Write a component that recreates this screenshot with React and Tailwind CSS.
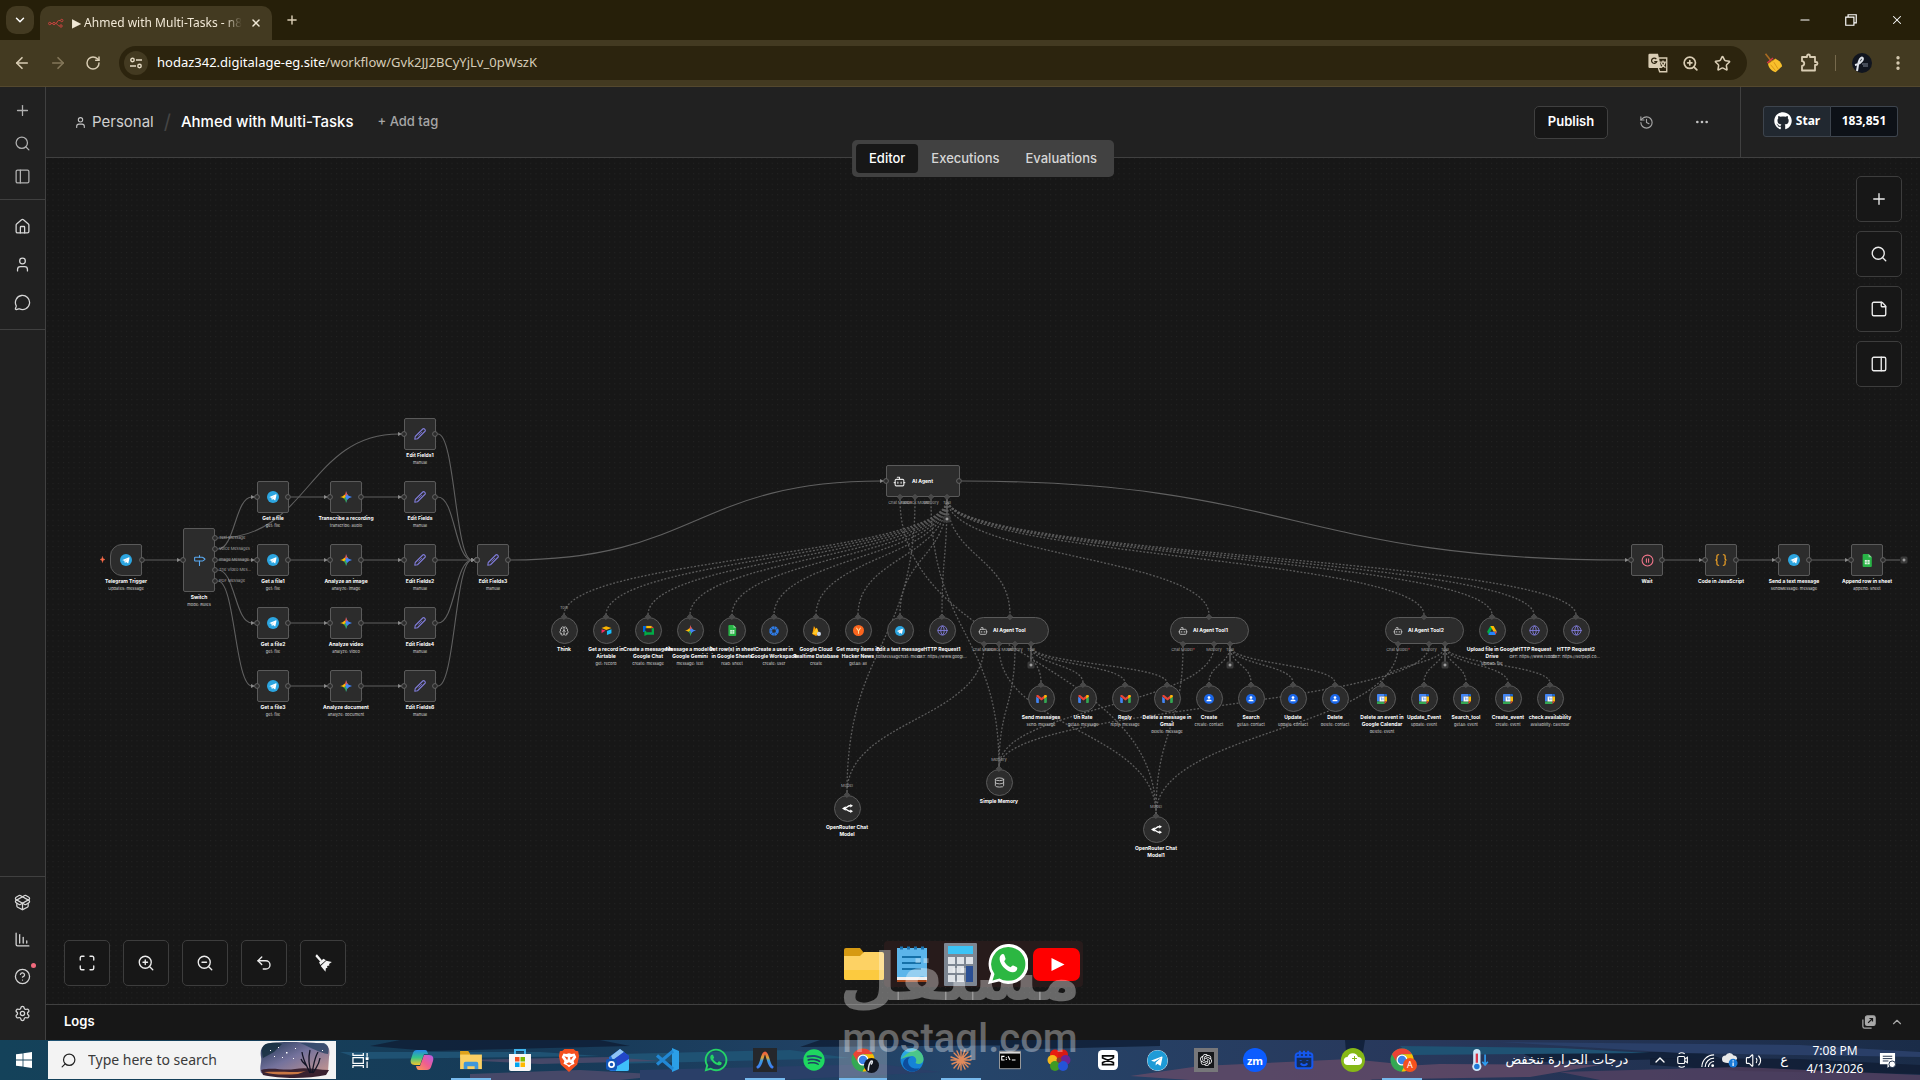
import {
  ArrowLeft,
  ArrowRight,
  Bot,
  Braces,
  Brain,
  ChartColumnDecreasing,
  ChevronDown,
  ChevronUp,
  CircleHelp,
  CirclePause,
  Database,
  Ellipsis,
  EllipsisVertical,
  Globe,
  History,
  House,
  Maximize,
  MessageCircle,
  Milestone,
  Minus,
  PackageOpen,
  PanelLeft,
  PanelRight,
  Plus,
  RotateCw,
  Search,
  Settings,
  Star,
  StickyNote,
  Undo2,
  User,
  Volume2,
  X,
  ZoomIn,
  ZoomOut,
} from "lucide-react";
import { FaGithub, FaSpotify, FaTelegram, FaWhatsapp } from "react-icons/fa";
import { SiOpenai } from "react-icons/si";

/* ---------- small drawings ---------- */

const N8nLogo = () => (
  <svg width="16" height="12" viewBox="0 0 32 20" fill="none" stroke="#c8433f" strokeWidth="2">
    <circle cx="3.500" cy="11" r="2.400" />
    <circle cx="12" cy="11" r="2.400" />
    <path d="M6 11h3.500M14.500 11c5 0 3-6 7-6h3M16 11c3 0 3 5 7 5" />
    <circle cx="27.500" cy="5" r="2.400" />
    <circle cx="26" cy="16" r="2.400" />
  </svg>
);

const Telegram = ({ className = "size-3" }) => (
  <svg viewBox="0 0 24 24" className={className}>
    <circle cx="12" cy="12" r="12" fill="#2ca5e0" />
    <path fill="#fff" d="M5 11.8 18 6.6c.7-.2 1.200.2 1 1.200l-2.200 10.200c-.2.800-.7.900-1.300.600l-3.300-2.500-1.700 1.600c-.4.400-.8.300-.9-.2l-.9-3.800-3.500-1.100c-.8-.2-.8-.6-.2-.8z" />
    <path fill="#b8d9ec" d="m9.700 13.700 6.200-4.500-4.900 5-.4 2.200z" />
  </svg>
);

const Gemini = ({ className = "size-3" }) => (
  <svg viewBox="0 0 24 24" className={className}>
    <path fill="#4285f4" d="M12 0c1 7 5 11 12 12-7 1-11 5-12 12z" />
    <path fill="#f05545" d="M12 0c-1 7-3 9-6 10.500L12 13l4-5C13.500 5.500 12.500 3 12 0z" />
    <path fill="#fbbc04" d="M0 12c4-.6 7-2 9-5l3 5-4 3c-2-1.600-5-2.600-8-3z" />
    <path fill="#34a853" d="M12 24c-.6-4-2-7.500-5-9.500l5-2.500 2 6z" />
    <path fill="#4285f4" d="M13 6.500c2 3 6 5 11 5.500-5 .5-8 2.500-10 5.500L10.500 12z" />
  </svg>
);

const EditPen = () => (
  <svg viewBox="0 0 24 24" className="size-3" fill="none" stroke="#7f7bd8" strokeWidth="2.200" strokeLinejoin="round">
    <path d="m1.500 22.500 1-5.500L17.500 2a2.400 2.400 0 0 1 3.400 0l1.100 1.100a2.400 2.400 0 0 1 0 3.400L7 21.500z" />
    <path d="m9 15 7-7" strokeWidth="1.400" />
  </svg>
);

const Sheets = ({ className = "size-3" }) => (
  <svg viewBox="0 0 24 24" className={className}>
    <path fill="#28b446" d="M5 0h9l6 6v16a2 2 0 0 1-2 2H5a2 2 0 0 1-2-2V2a2 2 0 0 1 2-2z" />
    <path fill="#8ed29b" d="M14 0v6h6z" />
    <path fill="#e4f4e6" d="M7 11h9v8H7z" />
    <path stroke="#28b446" d="M7 15h9M11.500 11v8" />
  </svg>
);

const Gmail = () => (
  <svg viewBox="0 0 24 18" className="h-2 w-[11px]">
    <path fill="#4285f4" d="M0 4v12a2 2 0 0 0 2 2h4V8z" />
    <path fill="#34a853" d="M24 4v12a2 2 0 0 1-2 2h-4V8z" />
    <path fill="#ea4335" d="M0 3c0-3 3-4 5-2.500L12 6l7-5.500C21 -1 24 0 24 3l-6 5-6 4.500L6 8z" />
    <path fill="#fbbc04" d="M18 1.300 19 .5C21-1 24 0 24 3v1l-6 4.500z" />
  </svg>
);

const Contact = () => (
  <svg viewBox="0 0 24 24" className="size-[10px]">
    <circle cx="12" cy="12" r="12" fill="#1a66e8" />
    <circle cx="12" cy="8.500" r="3.200" fill="#fff" />
    <path fill="#fff" d="M5.500 17.500c0-6 13-6 13 0z" />
  </svg>
);

const Calendar = () => (
  <svg viewBox="0 0 24 24" className="size-[10px]">
    <path fill="#4285f4" d="M0 2a2 2 0 0 1 2-2h16v6H6v12H0z" />
    <path fill="#1967d2" d="M18 0h4a2 2 0 0 1 2 2v4h-6z" />
    <path fill="#fbbc04" d="M18 6h6v12h-6z" />
    <path fill="#34a853" d="M0 18h18v6H2a2 2 0 0 1-2-2z" />
    <path fill="#ea4335" d="M18 18h6l-6 6z" />
    <path fill="#fff" d="M6 6h12v12H6z" />
    <path stroke="#4285f4" strokeWidth="1.600" fill="none" d="M9 9h2v6M14.500 9v6" />
  </svg>
);

const Airtable = () => (
  <svg viewBox="0 0 24 20" className="h-[9px] w-[11px]">
    <path fill="#fcb400" d="M11 .5 1 4.500 11.500 9 23 4.500z" />
    <path fill="#18bfff" d="M13 11v9l10-4V7z" />
    <path fill="#f82b60" d="M1 7v9l9-6z" />
  </svg>
);

const GChat = () => (
  <svg viewBox="0 0 24 24" className="size-[11px]">
    <path fill="#0066da" d="M0 2h7v5H5v8H0z" />
    <path fill="#fbbc04" d="M7 2h12v5H7z" />
    <path fill="#ea4335" d="M19 2l5 5h-5z" />
    <path fill="#00ac47" d="M19 7h5v14H9l-6 3V13h4v3h12z" />
  </svg>
);

const Workspace = () => (
  <svg viewBox="0 0 24 24" className="size-[10px]">
    <circle cx="12" cy="12" r="8" fill="none" stroke="#2f7de9" strokeWidth="7" strokeDasharray="5.280 1" />
  </svg>
);

const Firebase = () => (
  <svg viewBox="0 0 24 24" className="size-[10px]">
    <path fill="#ffa000" d="M3 19 7 0l5 8 2-4 6 15-8 5z" />
    <path fill="#ffca28" d="M3 19 14 4l3 10-5 6z" />
    <circle cx="19" cy="19" r="5" fill="#c9d6e8" />
  </svg>
);

const HackerNews = () => (
  <svg viewBox="0 0 24 24" className="size-[11px]">
    <circle cx="12" cy="12" r="12" fill="#fb651e" />
    <path d="m7.500 6 4.500 7 4.500-7M12 13v6" stroke="#ffe0a0" strokeWidth="2.200" fill="none" />
  </svg>
);

const Drive = () => (
  <svg viewBox="0 0 24 22" className="h-[9px] w-[10px]">
    <path fill="#00ac47" d="M8 0h8L4 21 0 14z" />
    <path fill="#ffba00" d="M8 0h8l8 14h-8z" />
    <path fill="#2684fc" d="M7 14h17l-4 8H3z" />
    <path fill="#ea4335" d="M18 14h6l-3.500 7z" />
  </svg>
);

const OpenRouter = () => (
  <svg viewBox="0 0 24 24" className="size-[11px]" fill="none" stroke="#fff" strokeWidth="3">
    <path d="M4 12c6 0 8-6 13-6h2M4 12c6 0 8 6 13 6h2" />
    <path fill="#fff" stroke="none" d="m0 12 8-5v10zM18 2l6 4-6 4zM18 14l6 4-6 4z" />
  </svg>
);

const Broom = ({ className = "size-5" }) => (
  <svg viewBox="0 0 24 24" className={className} fill="#f3f3f3">
    <path d="M2.500 1 4 .5l6 7.500-2 1.700L2 3z" />
    <path d="m6.500 10.500 5.500-4.500 3 2-7 6z" />
    <path d="m8.500 15 7-6.500 7 1.500-3.500 2.500.5 2-3 .5.500 2.500-2 .5-.5 4.500z" />
  </svg>
);

const EmojiBroom = () => (
  <svg viewBox="0 0 24 24" className="size-5">
    <path stroke="#a86a22" strokeWidth="2" d="m3 1 8 10" />
    <path fill="#f9c02b" d="m6 13 9-6c4 2 7 4 8 9l-8 7c-6-2-8-5-9-10z" />
    <path stroke="#d58e16" fill="none" d="m9 14 6 7M13 11l5 8M6 13l9-6" />
    <path stroke="#e0364a" strokeWidth="1.500" d="m5 12 7-6" />
  </svg>
);

const Extension = () => (
  <svg viewBox="0 0 20 20" className="size-5" fill="none" stroke="#d9cdb4" strokeWidth="1.800" strokeLinejoin="round">
    <path d="M3 4h5V3a1.500 1.500 0 0 1 3 0v1h5v5h1a1.500 1.500 0 0 1 0 3h-1v5.500H3V13c3-.3 3-4.500 0-4.800z" />
  </svg>
);

const Translate = () => (
  <svg viewBox="0 0 24 24" className="size-5">
    <path fill="#d9cdb4" d="M2 1h10l4 17H2a1.500 1.500 0 0 1-1.500-1.500v-14A1.500 1.500 0 0 1 2 1z" />
    <path fill="none" stroke="#d9cdb4" strokeWidth="1.600" d="M13 6h9.500v16.500H14L12.500 18M14.500 11h7M18 9v2M20.500 11c-.5 3-2 5-5 6.500M16 12c1 3 2.500 4.500 5 5.500" />
    <path fill="none" stroke="#2d240f" strokeWidth="1.500" d="M10 7.300a3.200 3.200 0 1 0 .5 3H7.500" />
  </svg>
);

const FolderIcon = ({ className }) => (
  <svg viewBox="0 0 40 32" className={className}>
    <path fill="#d69a12" d="M0 2a2 2 0 0 1 2-2h14l4 5v6H0z" />
    <path fill="#fdd264" d="M0 8h16l4-4h18a2 2 0 0 1 2 2v24a2 2 0 0 1-2 2H2a2 2 0 0 1-2-2z" />
    <path fill="#fbc62f" d="M0 22h40v8a2 2 0 0 1-2 2H2a2 2 0 0 1-2-2z" opacity=".7" />
  </svg>
);

const ExplorerIcon = () => (
  <svg viewBox="0 0 24 22" className="h-5 w-[22px]">
    <path fill="#dfa21c" d="M0 1h9l2 3v4H0z" />
    <path fill="#fbd063" d="M0 5h24v16H0z" />
    <path fill="#3f97da" d="M4 21v-6a2 2 0 0 1 2-2h12a2 2 0 0 1 2 2v6h-4v-3H8v3z" />
  </svg>
);

const Chrome = () => (
  <svg viewBox="0 0 48 48" className="size-6">
    <circle cx="24" cy="24" r="23" fill="#34a853" />
    <path fill="#ea4335" d="M4 12.500a23 23 0 0 1 40 0H24a11.500 11.500 0 0 0-10.500 16z" />
    <path fill="#fbbc04" d="M44 12.500A23 23 0 0 1 23 47l10.500-18A11.500 11.500 0 0 0 24 12.500z" />
    <circle cx="24" cy="24" r="11" fill="#fff" />
    <circle cx="24" cy="24" r="8.500" fill="#3b82e8" />
  </svg>
);

const Copilot = () => (
  <svg viewBox="0 0 24 24" className="size-6">
    <defs>
      <linearGradient id="cpA" x1="0" y1="0" x2="0" y2="1">
        <stop offset="0" stopColor="#2385e8" />
        <stop offset=".5" stopColor="#35c48a" />
        <stop offset="1" stopColor="#f3c52c" />
      </linearGradient>
      <linearGradient id="cpB" x1="1" y1="0" x2="0" y2="1">
        <stop offset="0" stopColor="#b45ce8" />
        <stop offset=".5" stopColor="#ef5d90" />
        <stop offset="1" stopColor="#fb9d4c" />
      </linearGradient>
    </defs>
    <path fill="url(#cpA)" d="M7 2h8c2 0 2.500 2 3 4h-4l-4 11H5c-4 0-5-3-4-6l2-6c.6-2 2-3 4-3z" />
    <path fill="url(#cpB)" d="M17 22H9c-2 0-2.500-2-3-4h4l4-11h5c4 0 5 3 4 6l-2 6c-.6 2-2 3-4 3z" />
  </svg>
);

const Store = () => (
  <svg viewBox="0 0 24 24" className="size-6">
    <path fill="none" stroke="#3fb4ee" strokeWidth="2" d="M7 7V2h10v5" />
    <path fill="#f6f6f6" d="M1 6h22v15a2 2 0 0 1-2 2H3a2 2 0 0 1-2-2z" />
    <path fill="#f25022" d="M7 9h4.500v4.500H7z" />
    <path fill="#7fba00" d="M12.500 9H17v4.500h-4.500z" />
    <path fill="#00a4ef" d="M7 14.500h4.500V19H7z" />
    <path fill="#ffb900" d="M12.500 14.500H17V19h-4.500z" />
  </svg>
);

const Brave = () => (
  <svg viewBox="0 0 24 26" className="h-6 w-[22px]">
    <path fill="#f4501e" d="M7 1h10l2 2 3 .5L23 9l-2 9-9 8-9-8L1 9l1-5.500L5 3z" />
    <path fill="#fff" d="m6 6 3 .5 3-.8 3 .8 3-.5 2 4-3 4 1 3-4 2-2 2-2-2-4-2 1-3-3-4z" />
    <path fill="#f4501e" d="m7 9 4 1.200-1 3zM17 9l-4 1.200 1 3zM9 17l3-1.500 3 1.500-3 1.500z" />
  </svg>
);

const Outlook = () => (
  <svg viewBox="0 0 24 24" className="size-6">
    <path fill="#1f6fd8" d="M3 9 14 1l9 7v13a2 2 0 0 1-2 2H5a2 2 0 0 1-2-2z" />
    <path fill="#8fc4f4" d="m5 8 9-7 4 3-11 8z" />
    <path fill="#2247c8" d="m7 12 11-8 5 4v3l-11 7z" />
    <path fill="#3fc0fa" d="m23 11-13 8v4h11a2 2 0 0 0 2-2z" />
    <rect x="0" y="11" width="11" height="11" rx="2" fill="#1256b8" />
    <circle cx="5.500" cy="16.500" r="2.600" fill="none" stroke="#fff" strokeWidth="1.700" />
  </svg>
);

const VsCode = () => (
  <svg viewBox="0 0 24 24" className="size-6">
    <path fill="#2b9fe8" d="m17 0 7 3v18l-7 3z" />
    <path fill="none" stroke="#2288d4" strokeWidth="3.200" d="M18 3 2 16.500M18 21 2 7.500" />
  </svg>
);

const Antigravity = () => (
  <svg viewBox="0 0 24 24" className="size-6">
    <defs>
      <linearGradient id="ag" x1="0" y1="0" x2="0" y2="1">
        <stop offset="0" stopColor="#f0623c" />
        <stop offset=".35" stopColor="#d9a53a" />
        <stop offset=".55" stopColor="#3c9de0" />
        <stop offset="1" stopColor="#3f7df0" />
      </linearGradient>
    </defs>
    <path fill="#25272b" d="M0 0h24v24H0z" />
    <path fill="none" stroke="url(#ag)" strokeWidth="3" strokeLinecap="round" d="M5 19c4-2 4-14 7-14s3 12 7 14" />
  </svg>
);

const Edge = () => (
  <svg viewBox="0 0 24 24" className="size-6">
    <circle cx="12" cy="12" r="11.500" fill="#1583d6" />
    <path fill="#55d27c" d="M10 .7C18-.5 24 6 23.500 12c-.5 4-5 5-8 3 2-3 0-7-4-7-4 .3-8 2-10.500 3C1.500 6 5 1.500 10 .7z" opacity=".85" />
    <path fill="#2ba6e4" d="M1 11C1.500 5 6 .7 11 .6c4 0 6 1.400 6 1.400-6 0-11 4-16 9z" />
    <path fill="#0d4d9c" d="M8 13c0 6 6 9 12 7-5 6-14 4-17-3 0-5 3-8 8-8-2 .6-3 2-3 4z" />
  </svg>
);

const Claude = () => (
  <svg viewBox="0 0 24 24" className="size-6" stroke="#e08a5b" strokeWidth="1.400" strokeLinecap="round">
    <path d="M12 2v20M2 12h20M5 5l14 14M19 4 5 20M8 3l8 18M16 2 9 21M2 9l19 7M22 8 3 16" />
  </svg>
);

const Terminal = () => (
  <svg viewBox="0 0 24 20" className="h-5 w-[22px]">
    <path fill="#050505" stroke="#a8a8a8" d="M.5.500h23v19H.500z" />
    <path fill="#d8d8d8" d="M1 1h22v2H1z" />
    <path stroke="#fff" strokeWidth="1.200" fill="none" d="M6 6H3v4h3M8 7v1M8 9v1M10 6l2 4M14 10h4" />
  </svg>
);

const Photos = () => (
  <svg viewBox="0 0 24 24" className="size-6">
    <circle cx="8" cy="6.500" r="5" fill="#e81c10" />
    <circle cx="16" cy="6.500" r="5" fill="#d81a14" />
    <circle cx="5.500" cy="12" r="5" fill="#f5b81c" />
    <circle cx="18.500" cy="12" r="5" fill="#6a2496" />
    <circle cx="8" cy="18" r="5" fill="#3f9a24" />
    <circle cx="16" cy="18" r="5" fill="#2454d8" />
    <circle cx="12" cy="12" r="2.500" fill="#8b3f2a" />
  </svg>
);

const CapCut = () => (
  <svg viewBox="0 0 24 24" className="size-5">
    <rect width="24" height="24" rx="5" fill="#fff" />
    <path fill="none" stroke="#0b0b0b" strokeWidth="2" d="M18.500 9.500V7H5.500v2.500l13 5.500v2.500h-13V15l13-5.500" />
  </svg>
);

const Zoom = () => (
  <span className="flex size-6 items-center justify-center rounded-full bg-[#0b5cff] text-[11px] leading-none font-bold text-white">zm</span>
);

const CalendarSmile = () => (
  <svg viewBox="0 0 24 24" className="size-5" fill="none" stroke="#1558f0" strokeWidth="2.400">
    <rect x="2" y="4" width="20" height="18" rx="3" fill="#132c5a" />
    <path d="M2 8h20M7 1v6M12 1v6M17 1v6M8 12v1M16 12v1M8 16c2 3 6 3 8 0" />
  </svg>
);

const CloudApp = () => (
  <svg viewBox="0 0 24 24" className="size-6">
    <circle cx="12" cy="12" r="12" fill="#86b817" />
    <path fill="#fff" d="M7 17a4 4 0 0 1-.5-8 5.500 5.500 0 0 1 10.500 0 4 4 0 0 1 0 8z" />
    <path stroke="#86b817" d="M13.500 8v5M11 10.500h5" />
  </svg>
);

const Windows = () => (
  <svg viewBox="0 0 16 16" className="size-4" fill="#fff">
    <path d="M0 2.300 6.600 1.400v6.200H0zM7.400 1.300 16 0v7.600H7.400zM0 8.400h6.600v6.200L0 13.700zM7.400 8.400H16V16l-8.600-1.300z" />
  </svg>
);

const TaskView = () => (
  <svg viewBox="0 0 18 18" className="size-[17px]" fill="none" stroke="#fff" strokeWidth="1.300">
    <path d="M1 1v2.500h11V1M1 17v-2.500h11V17M1 6h11v6H1zM16 1v4M16 10v7" />
    <path fill="#fff" stroke="none" d="M14.500 5.500h3v3h-3z" />
  </svg>
);

const SearchScene = () => (
  <svg viewBox="0 0 70 36" className="h-9 w-[70px]">
    <defs>
      <linearGradient id="sky" x1="0" y1="0" x2="1" y2="1">
        <stop offset="0" stopColor="#1c3350" />
        <stop offset=".45" stopColor="#74729c" />
        <stop offset="1" stopColor="#d09a8e" />
      </linearGradient>
    </defs>
    <path fill="url(#sky)" d="M6 2c12-3 46-2 58 0 6 2 6 8 5 13l-1 15c-14 6-54 6-67 1-2-6 1-10 0-16S1 5 6 2z" />
    <path fill="#3a2230" d="M1 28c12-3 22 1 34-1s22 1 34 1l-3 5c-18 4-46 4-63 0z" />
    <path fill="#c87744" d="M4 30c16-1 34 1 42-1l-8 3c-12 1-26 1-34-2z" />
    <path fill="#15303e" d="M6 2c8-2 12-1 16 0l-8 8-11 6C1 8 2 4 6 2z" opacity=".8" />
    <path fill="#2a4464" d="M40 1h24c5 2 5 7 4 11-8-1-16-6-28-11z" opacity=".8" />
    <path stroke="#121425" fill="none" strokeWidth="1.300" d="M50 31C46 22 43 18 42 10M51 31c-2-9-3-14-1-23M52 31c2-9 2-14 6-21M53 31c4-7 6-8 7-15M47 24c-3-3-5-4-6-7" />
    <path fill="#fff" d="M10 8h1v1h-1zM18 5h1v1h-1zM26 10h1.500v1.500H26zM35 6h1v1h-1zM22 15h1v1h-1zM33 16h1v1h-1zM62 8h1v1h-1zM14 14h1v1h-1z" />
  </svg>
);

/* ---------- workflow data ---------- */

const squares = [
  { x: 126, y: 560, icon: <Telegram />, lines: ["Telegram Trigger"], sub: "Updates: message", trigger: true },
  { x: 273, y: 497, icon: <Telegram />, lines: ["Get a file"], sub: "get: file" },
  { x: 273, y: 560, icon: <Telegram />, lines: ["Get a file1"], sub: "get: file" },
  { x: 273, y: 623, icon: <Telegram />, lines: ["Get a file2"], sub: "get: file" },
  { x: 273, y: 686, icon: <Telegram />, lines: ["Get a file3"], sub: "get: file" },
  { x: 346, y: 497, icon: <Gemini />, lines: ["Transcribe a recording"], sub: "transcribe: audio" },
  { x: 346, y: 560, icon: <Gemini />, lines: ["Analyze an image"], sub: "analyze: image" },
  { x: 346, y: 623, icon: <Gemini />, lines: ["Analyze video"], sub: "analyze: video" },
  { x: 346, y: 686, icon: <Gemini />, lines: ["Analyze document"], sub: "analyze: document" },
  { x: 420, y: 434, icon: <EditPen />, lines: ["Edit Fields1"], sub: "manual" },
  { x: 420, y: 497, icon: <EditPen />, lines: ["Edit Fields"], sub: "manual" },
  { x: 420, y: 560, icon: <EditPen />, lines: ["Edit Fields2"], sub: "manual" },
  { x: 420, y: 623, icon: <EditPen />, lines: ["Edit Fields4"], sub: "manual" },
  { x: 420, y: 686, icon: <EditPen />, lines: ["Edit Fields6"], sub: "manual" },
  { x: 493, y: 560, icon: <EditPen />, lines: ["Edit Fields3"], sub: "manual" },
  { x: 1647, y: 560, icon: <CirclePause className="size-[13px] text-[#f0758a]" />, lines: ["Wait"] },
  { x: 1721, y: 560, icon: <Braces className="size-[14px] text-[#f9a825]" />, lines: ["Code in JavaScript"] },
  { x: 1794, y: 560, icon: <Telegram />, lines: ["Send a text message"], sub: "sendMessage: message" },
  { x: 1867, y: 560, icon: <Sheets className="size-[13px]" />, lines: ["Append row in sheet"], sub: "append: sheet" },
];

const web = <Globe className="size-[11px] text-[#7f7bd8]" />;

const circles = [
  { x: 564, y: 630, icon: <Brain className="size-[10px] text-[#c4c4c4]" />, lines: ["Think"] },
  { x: 606, y: 630, icon: <Airtable />, lines: ["Get a record in", "Airtable"], sub: "get: record" },
  { x: 648, y: 630, icon: <GChat />, lines: ["Create a message in", "Google Chat"], sub: "create: message" },
  { x: 690, y: 630, icon: <Gemini className="size-[11px]" />, lines: ["Message a model in", "Google Gemini"], sub: "message: text" },
  { x: 732, y: 630, icon: <Sheets className="size-[11px]" />, lines: ["Get row(s) in sheet", "in Google Sheets"], sub: "read: sheet" },
  { x: 774, y: 630, icon: <Workspace />, lines: ["Create a user in", "Google Workspace"], sub: "create: user" },
  { x: 816, y: 630, icon: <Firebase />, lines: ["Google Cloud", "Realtime Database"], sub: "create" },
  { x: 858, y: 630, icon: <HackerNews />, lines: ["Get many items in", "Hacker News"], sub: "getAll: all" },
  { x: 900, y: 630, icon: <Telegram className="size-[10px]" />, lines: ["Edit a text message"], sub: "editMessageText: mess..." },
  { x: 942, y: 630, icon: web, lines: ["HTTP Request1"], sub: "GET: https://www.googl..." },
  { x: 1492, y: 630, icon: <Drive />, lines: ["Upload file in Google", "Drive"], sub: "upload: file" },
  { x: 1534, y: 630, icon: web, lines: ["HTTP Request"], sub: "GET: https://www.reddit..." },
  { x: 1576, y: 630, icon: web, lines: ["HTTP Request2"], sub: "GET: https://serpapi.co..." },
  { x: 1041, y: 698, icon: <Gmail />, lines: ["Send messages"], sub: "send: message" },
  { x: 1083, y: 698, icon: <Gmail />, lines: ["Un Rate"], sub: "getAll: message" },
  { x: 1125, y: 698, icon: <Gmail />, lines: ["Reply"], sub: "reply: message" },
  { x: 1167, y: 698, icon: <Gmail />, lines: ["Delete a message in", "Gmail"], sub: "delete: message" },
  { x: 1209, y: 698, icon: <Contact />, lines: ["Create"], sub: "create: contact" },
  { x: 1251, y: 698, icon: <Contact />, lines: ["Search"], sub: "getAll: contact" },
  { x: 1293, y: 698, icon: <Contact />, lines: ["Update"], sub: "update: contact" },
  { x: 1335, y: 698, icon: <Contact />, lines: ["Delete"], sub: "delete: contact" },
  { x: 1382, y: 698, icon: <Calendar />, lines: ["Delete an event in", "Google Calendar"], sub: "delete: event" },
  { x: 1424, y: 698, icon: <Calendar />, lines: ["Update_Event"], sub: "update: event" },
  { x: 1466, y: 698, icon: <Calendar />, lines: ["Search_tool"], sub: "getAll: event" },
  { x: 1508, y: 698, icon: <Calendar />, lines: ["Create_event"], sub: "create: event" },
  { x: 1550, y: 698, icon: <Calendar />, lines: ["check availability"], sub: "availability: calendar" },
  { x: 847, y: 808, icon: <OpenRouter />, lines: ["OpenRouter Chat", "Model"] },
  { x: 999, y: 782, icon: <Database className="size-[11px] text-[#c4c4c4]" />, lines: ["Simple Memory"] },
  { x: 1156, y: 829, icon: <OpenRouter />, lines: ["OpenRouter Chat", "Model1"] },
];

const agents = [
  { x: 970, name: "AI Agent Tool" },
  { x: 1170, name: "AI Agent Tool1" },
  { x: 1385, name: "AI Agent Tool2" },
];

const switchPorts = [
  [538, "Text Message"],
  [549, "Voice Messages"],
  [560, "Image Message"],
  [570, "The Video Mes..."],
  [581, "PDF Message"],
];

const portLabels = [
  [900, 503, "Chat Model", true],
  [915, 503, "Fallback Model"],
  [931, 503, "Memory"],
  [947, 503, "Tool"],
  [984, 650, "Chat Model", true],
  [999, 650, "Fallback Model"],
  [1015, 650, "Memory"],
  [1031, 650, "Tool"],
  [1183, 650, "Chat Model", true],
  [1214, 650, "Memory"],
  [1230, 650, "Tool"],
  [1398, 650, "Chat Model", true],
  [1429, 650, "Memory"],
  [1445, 650, "Tool"],
  [564, 608, "Tool"],
  [847, 786, "Model"],
  [999, 760, "Memory"],
  [1156, 807, "Model"],
];

// x1, y1, x2, y2 between output and input handles
const mainEdges = [
  [145, 560, 178, 560],
  [218, 538, 399, 434],
  [218, 549, 252, 497],
  [218, 560, 252, 560],
  [218, 570, 252, 623],
  [218, 581, 252, 686],
  [291, 497, 325, 497],
  [291, 560, 325, 560],
  [291, 623, 325, 623],
  [291, 686, 325, 686],
  [364, 497, 399, 497],
  [364, 560, 399, 560],
  [364, 623, 399, 623],
  [364, 686, 399, 686],
  [438, 434, 472, 560],
  [438, 497, 472, 560],
  [438, 560, 472, 560],
  [438, 623, 472, 560],
  [438, 686, 472, 560],
  [511, 560, 881, 481],
  [962, 481, 1626, 560],
  [1665, 560, 1700, 560],
  [1739, 560, 1773, 560],
  [1812, 560, 1846, 560],
];

const agentTools = [564, 606, 648, 690, 732, 774, 816, 858, 900, 942, 1010, 1209, 1424, 1492, 1534, 1576];

const subEdges = [
  ...agentTools.map((x) => [947, 499, x, 615]),
  ...[1041, 1083, 1125, 1167].map((x) => [1031, 646, x, 683]),
  ...[1209, 1251, 1293, 1335].map((x) => [1230, 646, x, 683]),
  ...[1382, 1424, 1466, 1508, 1550].map((x) => [1445, 646, x, 683]),
  [900, 499, 1156, 814],
  [915, 499, 847, 793],
  [931, 499, 999, 767],
  [984, 646, 847, 793],
  [999, 646, 1156, 814],
  [1015, 646, 999, 767],
  [1183, 646, 1156, 814],
  [1214, 646, 999, 767],
  [1398, 646, 1156, 814],
  [1429, 646, 999, 767],
];

const diamonds = [
  [900, 497], [915, 497], [931, 497], [947, 497],
  [984, 644], [999, 644], [1015, 644], [1031, 644],
  [1183, 644], [1214, 644], [1230, 644],
  [1398, 644], [1429, 644], [1445, 644],
  [1010, 617], [1209, 617], [1424, 617],
];

const plusPorts = [
  [947, 519],
  [1031, 665],
  [1230, 665],
  [1445, 665],
];

const hPath = ([a, b, c, d]) => `M${a} ${b}C${(a + c) / 2} ${b} ${(a + c) / 2} ${d} ${c} ${d}`;
const vPath = ([a, b, c, d]) => `M${a} ${b}C${a} ${(b + d) / 2} ${c} ${(b + d) / 2} ${c} ${d}`;

/* ---------- canvas ---------- */

function NodeLabel({ lines, sub }) {
  return (
    <div className="mt-[2px] flex flex-col items-center whitespace-nowrap">
      {lines.map((line) => (
        <span key={line} className="text-[5px] leading-[7px] font-bold text-white">{line}</span>
      ))}
      {sub && <span className="text-[4px] leading-[7px] font-medium text-[#bdbdbd]">{sub}</span>}
    </div>
  );
}

function Edges() {
  return (
    <svg className="absolute top-0 left-0 h-[1080px] w-[4000px]" fill="none">
      <defs>
        <pattern id="dots" width="5.250" height="5.250" patternUnits="userSpaceOnUse">
          <rect width="1" height="1" fill="#232323" />
        </pattern>
      </defs>
      <rect width="4000" height="1080" fill="url(#dots)" />
      <g stroke="#5c5c5c" strokeWidth="1.300" strokeDasharray="1.900 1.700">
        {subEdges.map((e) => <path key={e.join()} d={vPath(e)} />)}
      </g>
      <g stroke="#606060" strokeWidth="1.100">
        {mainEdges.map((e) => <path key={e.join()} d={hPath(e)} />)}
        <path d="M1886 560h14" />
        {plusPorts.map(([x, y]) => <path key={x} d={`M${x} ${y - 20}v18`} strokeWidth="1.400" />)}
      </g>
      <g fill="#8a8a8a">
        {mainEdges.map(([, , x, y], i) => <path key={i} d={`M${x - 1} ${y - 2}l4 2-4 2z`} />)}
      </g>
    </svg>
  );
}

function Handles() {
  const dots = [
    ...mainEdges.flatMap(([a, b, c, d]) => [[a - 3, b], [c + 5, d]]),
    [1883, 560],
  ];
  return (
    <svg className="pointer-events-none absolute top-0 left-0 h-[1080px] w-[4000px]">
      <g fill="#2b2b2b" stroke="#6a6a6a" strokeWidth=".9">
        {dots.map(([x, y], i) => <circle key={i} cx={x} cy={y} r="2.400" />)}
      </g>
      <g fill="#484848" stroke="#5c5c5c" strokeWidth=".5">
        {diamonds.map(([x, y]) => <path key={`${x}-${y}`} d={`M${x} ${y - 2.8}l2.800 2.800-2.800 2.800-2.800-2.800z`} />)}
        {circles.map(({ x, y }) => <path key={`${x}-${y}`} d={`M${x} ${y - 16}l2.800 2.800-2.800 2.800-2.800-2.800z`} />)}
      </g>
      {[...plusPorts, [1904, 560]].map(([x, y]) => (
        <g key={x}>
          <rect x={x - 3.5} y={y - 3.5} width="7" height="7" rx="1.500" fill="#3a3a3a" />
          <path d={`M${x - 1.500} ${y}h3M${x} ${y - 1.500}v3`} stroke="#c8c8c8" strokeWidth=".9" />
        </g>
      ))}
      <path d="M102.500 556.500c.3 2 .9 2.700 2.500 3-1.600.3-2.200 1-2.500 3-.3-2-.9-2.700-2.500-3 1.600-.3 2.200-1 2.500-3z" fill="#ff6d4a" stroke="#ff6d4a" strokeWidth=".5" />
    </svg>
  );
}

function Workflow() {
  return (
    <div className="absolute inset-0 -translate-x-[46px] -translate-y-[158px]">
      <Edges />

      {squares.map((n) => (
        <div
          key={n.lines[0]}
          className="absolute flex w-20 -translate-x-10 -translate-y-4 flex-col items-center"
          style={{ left: n.x, top: n.y }}
        >
          <div
            className={`flex size-8 items-center justify-center border border-[#5a5a5a] bg-[#2c2c2c] ${
              n.trigger ? "rounded-l-xl rounded-r-[2px]" : "rounded-[2px]"
            }`}
          >
            {n.icon}
          </div>
          <NodeLabel lines={n.lines} sub={n.sub} />
        </div>
      ))}

      {/* Switch */}
      <div className="absolute flex -translate-x-4 -translate-y-8 flex-col items-center" style={{ left: 199, top: 560 }}>
        <div className="flex h-16 w-8 items-center justify-center rounded-[2px] border border-[#5a5a5a] bg-[#2c2c2c]">
          <Milestone className="size-[13px] text-[#5aa9f0]" />
        </div>
        <NodeLabel lines={["Switch"]} sub="mode: Rules" />
      </div>
      {switchPorts.map(([y, text]) => (
        <span
          key={text}
          className="absolute -translate-y-[3px] text-[4px] leading-[6px] whitespace-nowrap text-[#a2a2a2]"
          style={{ left: 219, top: y }}
        >
          {text}
        </span>
      ))}

      {/* AI Agent */}
      <div
        className="absolute flex h-8 w-[74px] items-center gap-[6px] rounded-[2px] border border-[#5a5a5a] bg-[#2c2c2c] pl-[6px]"
        style={{ left: 886, top: 465 }}
      >
        <Bot className="size-[13px] text-[#e4e4e4]" />
        <span className="text-[5px] leading-[7px] font-bold text-white">AI Agent</span>
      </div>
      {agents.map((a) => (
        <div
          key={a.name}
          className="absolute flex h-[27px] w-[79px] items-center gap-[5px] rounded-full border border-[#5a5a5a] bg-[#2c2c2c] pl-[7px]"
          style={{ left: a.x, top: 617 }}
        >
          <Bot className="size-[10px] text-[#c8c8c8]" />
          <span className="text-[5px] leading-[7px] font-bold text-white">{a.name}</span>
        </div>
      ))}

      {circles.map((n) => (
        <div
          key={`${n.x}-${n.y}`}
          className="absolute flex w-20 -translate-x-10 -translate-y-[13px] flex-col items-center"
          style={{ left: n.x, top: n.y }}
        >
          <div className="flex size-[27px] items-center justify-center rounded-full border border-[#5a5a5a] bg-[#2c2c2c]">
            {n.icon}
          </div>
          <NodeLabel lines={n.lines} sub={n.sub} />
        </div>
      ))}

      {portLabels.map(([x, y, text, required]) => (
        <span
          key={`${x}-${y}`}
          className="absolute flex w-10 -translate-x-5 -translate-y-[3px] justify-center text-[4px] leading-[6px] whitespace-nowrap text-[#a2a2a2]"
          style={{ left: x, top: y }}
        >
          {text}
          {required && <span className="text-[#f0455a]">*</span>}
        </span>
      ))}

      <Handles />
    </div>
  );
}

const canvasButton =
  "flex size-[46px] items-center justify-center rounded-[5px] border border-[#3d3d3d] bg-[#171717] text-[#ececec]";

function Canvas() {
  return (
    <main className="relative min-h-[600px] flex-1 overflow-hidden bg-[#171717]">
      <Workflow />
      <div className="absolute top-[18px] right-[18px] flex flex-col gap-[9px]">
        <button aria-label="Add node" className={canvasButton}><Plus className="size-[18px]" strokeWidth={1.8} /></button>
        <button aria-label="Search nodes" className={canvasButton}><Search className="size-[18px]" strokeWidth={1.8} /></button>
        <button aria-label="Add note" className={canvasButton}><StickyNote className="size-[18px]" strokeWidth={1.8} /></button>
        <button aria-label="Toggle panel" className={canvasButton}><PanelRight className="size-[18px]" strokeWidth={1.8} /></button>
      </div>
      <div className="absolute bottom-[18px] left-[18px] flex gap-[13px]">
        <button aria-label="Fit view" className={canvasButton}><Maximize className="size-[18px]" strokeWidth={1.8} /></button>
        <button aria-label="Zoom in" className={canvasButton}><ZoomIn className="size-[18px]" strokeWidth={1.8} /></button>
        <button aria-label="Zoom out" className={canvasButton}><ZoomOut className="size-[18px]" strokeWidth={1.8} /></button>
        <button aria-label="Undo" className={canvasButton}><Undo2 className="size-[18px]" strokeWidth={1.8} /></button>
        <button aria-label="Tidy up" className={canvasButton}><Broom className="size-[19px]" /></button>
      </div>
    </main>
  );
}

/* ---------- n8n shell ---------- */

function SideButton({ label, icon: Icon, bright, dot }) {
  return (
    <button
      aria-label={label}
      className={`relative flex size-6 items-center justify-center ${bright ? "text-[#d6d6d6]" : "text-[#b0b0b0]"}`}
    >
      <Icon className="size-[17px]" strokeWidth={1.800} />
      {dot && <span className="absolute -top-px -right-px size-[5px] rounded-full bg-[#f0697c]" />}
    </button>
  );
}

function Sidebar() {
  return (
    <nav className="flex w-[46px] shrink-0 flex-col border-r border-[#404040] bg-[#212121]">
      <div className="flex flex-col items-center gap-[9px] border-b border-[#404040] pt-[11px] pb-[11px]">
        <SideButton label="Create" icon={Plus} />
        <SideButton label="Search" icon={Search} />
        <SideButton label="Collapse" icon={PanelLeft} />
      </div>
      <div className="flex flex-col items-center gap-[14px] border-b border-[#404040] pt-[14px] pb-[15px]">
        <SideButton label="Overview" icon={House} bright />
        <SideButton label="Personal" icon={User} bright />
        <SideButton label="Chat" icon={MessageCircle} bright />
      </div>
      <div className="mt-auto flex flex-col items-center gap-[13px] border-t border-[#404040] pt-[13px] pb-[15px]">
        <SideButton label="Templates" icon={PackageOpen} bright />
        <SideButton label="Insights" icon={ChartColumnDecreasing} bright />
        <SideButton label="Help" icon={CircleHelp} bright dot />
        <SideButton label="Settings" icon={Settings} bright />
      </div>
    </nav>
  );
}

function Header() {
  return (
    <header className="relative z-10 flex h-[71px] shrink-0 items-stretch border-b border-[#404040] bg-[#212121]">
      <div className="flex flex-1 items-center pl-7">
        <User className="mr-[5px] size-[13px] text-[#c4c4c4]" />
        <a href="#personal" className="text-[15px] text-[#d0d0d0]">Personal</a>
        <span className="mx-[10px] text-xl text-[#454545]">/</span>
        <h1 className="text-[15px] font-medium text-white">Ahmed with Multi-Tasks</h1>
        <button className="ml-6 text-[13px] font-medium text-[#a6a6a6]">+ Add tag</button>
      </div>
      <div className="flex items-center">
        <button className="h-[33px] w-[74px] rounded-[5px] border border-[#404040] bg-[#171717] text-[13px] font-semibold text-white">
          Publish
        </button>
        <button aria-label="Version history" className="ml-[30px] flex size-4 items-center justify-center text-[#a6a6a6]">
          <History className="size-[15px]" strokeWidth={1.800} />
        </button>
        <button aria-label="More" className="mr-[30px] ml-10 flex size-4 items-center justify-center text-[#c4c4c4]">
          <Ellipsis className="size-4" />
        </button>
      </div>
      <div className="flex items-center border-l border-[#404040] pr-[22px] pb-[2px] pl-[22px] font-['Noto_Sans',sans-serif] text-xs font-bold text-white">
        <a href="#star" className="flex h-[31px] w-[68px] items-center justify-center gap-1 rounded-l-[3px] border border-[#3d444d] bg-[#212830]">
          <FaGithub className="size-[18px]" />
          <span>Star</span>
        </a>
        <a href="#stars" className="flex h-[31px] w-[67px] items-center justify-center rounded-r-[3px] border border-l-0 border-[#3d444d] bg-[#0d1117]">
          183,851
        </a>
      </div>
      <div className="absolute top-[53px] left-1/2 flex -translate-x-1/2 items-center rounded-[5px] bg-[#414141] p-[4px] text-[13px] font-medium text-[#d6d6d6]">
        <button className="h-[29px] rounded-[4px] bg-[#171717] px-[13px] text-white">Editor</button>
        <button className="h-[29px] px-[13px]">Executions</button>
        <button className="h-[29px] px-[13px]">Evaluations</button>
      </div>
    </header>
  );
}

function LogsBar() {
  return (
    <section className="flex h-9 shrink-0 items-center border-t border-[#404040] bg-[#171717] pr-4 pb-[2px] pl-[18px]">
      <h2 className="text-[13px] font-semibold text-white">Logs</h2>
      <button aria-label="Pop out" className="ml-auto">
        <svg viewBox="0 0 16 16" className="size-[14px]" fill="none" stroke="#a8a8a8" strokeWidth="1.400">
          <path d="M1 5v8a2 2 0 0 0 2 2h8" />
          <rect x="4" y="1" width="11" height="11" rx="2" fill="#a8a8a8" />
          <path stroke="#171717" d="m7 9 5-5M8.500 4H12v3.500" />
        </svg>
      </button>
      <button aria-label="Expand logs" className="ml-[14px] text-[#a8a8a8]"><ChevronUp className="size-[14px]" /></button>
    </section>
  );
}

/* ---------- browser ---------- */

function Browser() {
  return (
    <div className="shrink-0 bg-[#261f09] font-['Noto_Sans',sans-serif] text-[#d9cdb4]">
      <div className="flex h-10 items-end">
        <button aria-label="Search tabs" className="mr-[6px] mb-[6px] ml-[6px] flex size-7 items-center justify-center rounded-[10px] bg-[#433a21] text-white">
          <ChevronDown className="size-[14px]" strokeWidth={2.5} />
        </button>
        <div className="flex h-[34px] w-[232px] items-center rounded-t-[10px] bg-[#433a21] pr-[10px] pl-2">
          <N8nLogo />
          <span className="ml-2 w-[170px] overflow-hidden mask-r-from-90% text-xs whitespace-nowrap text-[#f1e8d6]">
            ▶ Ahmed with Multi-Tasks - n8n
          </span>
          <button aria-label="Close tab" className="ml-auto text-[#f1e8d6]"><X className="size-3" strokeWidth={3} /></button>
        </div>
        <button aria-label="New tab" className="mb-[13px] ml-[13px]"><Plus className="size-[14px]" strokeWidth={2.5} /></button>
        <div className="ml-auto flex gap-8 self-center pr-4 text-white">
          <button aria-label="Minimize"><Minus className="size-[14px]" strokeWidth={1.8} /></button>
          <button aria-label="Restore">
            <svg viewBox="0 0 12 12" className="size-[14px]" fill="none" stroke="currentColor"><path d="M1.500 3.500h7v7h-7zM3.500 3.500v-2h7v7h-2" /></svg>
          </button>
          <button aria-label="Close"><X className="size-[14px]" strokeWidth={1.8} /></button>
        </div>
      </div>
      <div className="flex h-[47px] items-center border-b border-[#54482e] bg-[#433a21] pr-[13px] pl-[13px]">
        <button aria-label="Back"><ArrowLeft className="size-[18px]" strokeWidth={2.2} /></button>
        <button aria-label="Forward" className="ml-[18px] text-[#84775a]"><ArrowRight className="size-[18px]" strokeWidth={2.2} /></button>
        <button aria-label="Reload" className="ml-[18px]"><RotateCw className="size-4" strokeWidth={2.2} /></button>
        <div className="ml-[18px] flex h-[34px] flex-1 items-center rounded-full bg-[#2c240e] pr-4 pl-[5px]">
          <button aria-label="Site information" className="flex size-6 items-center justify-center rounded-full bg-[#433a21]">
            <svg viewBox="0 0 12 12" className="size-3" fill="none" stroke="#e6dcc6" strokeWidth="1.400">
              <circle cx="2.500" cy="3" r="1.700" />
              <circle cx="9.500" cy="9" r="1.700" />
              <path d="M6 3h6M0 9h6" />
            </svg>
          </button>
          <span className="ml-[9px] flex-1 text-[13px]">
            <span className="text-white">hodaz342.digitalage-eg.site</span>
            <span className="text-[#d6ccb8]">/workflow/Gvk2JJ2BCyYjLv_0pWszK</span>
          </span>
          <button aria-label="Translate"><Translate /></button>
          <button aria-label="Zoom level" className="ml-[14px]"><ZoomIn className="size-[17px]" strokeWidth={2.4} /></button>
          <button aria-label="Bookmark" className="ml-[15px]"><Star className="size-[17px]" strokeWidth={2.2} /></button>
        </div>
        <button aria-label="Cleaner" className="ml-4"><EmojiBroom /></button>
        <button aria-label="Extensions" className="ml-4"><Extension /></button>
        <span className="ml-4 h-4 w-px bg-[#76694c]" />
        <button aria-label="Profile" className="ml-4">
          <svg viewBox="0 0 20 20" className="size-5">
            <circle cx="10" cy="10" r="10" fill="#11151f" />
            <path fill="none" stroke="#dfe3ea" strokeWidth="2" d="M5 18c1-5 1-9 3-12 2-3 4-1 2 2s-3 3-7 4" />
            <path stroke="#7c8494" d="M10 11h6M11 13h5" />
          </svg>
        </button>
        <button aria-label="Menu" className="ml-[17px]"><EllipsisVertical className="size-[18px]" strokeWidth={2.5} /></button>
      </div>
    </div>
  );
}

/* ---------- desktop ---------- */

function Dock() {
  return (
    <div className="absolute bottom-[93px] left-1/2 flex h-[46px] -translate-x-[116px] items-center">
      <FolderIcon className="h-8 w-10" />
      <div className="flex h-full items-center rounded-[4px] bg-[#271b1b] pr-[3px] pl-[13px]">
        <svg viewBox="0 0 30 38" className="h-[38px] w-[30px]">
          <path fill="#5cb5ea" d="M0 3h30v30H0z" />
          <path fill="#f0f0f0" d="M0 32h30v3H0z" />
          <path fill="#a8481c" d="M0 35h30v2H0z" />
          <path stroke="#1570a8" strokeWidth="1.800" d="M5 12h19M5 18h19M5 24h19" />
          <path stroke="#1a73b0" strokeWidth="3" strokeDasharray="3 4" d="M3 3h27" />
        </svg>
        <svg viewBox="0 0 33 43" className="ml-[17px] h-[43px] w-[33px]">
          <rect width="33" height="43" rx="1" fill="#7d8692" />
          <path fill="#3cc3f5" d="M4 3h25v8H4z" />
          <path fill="#dfe3e8" d="M4 14h7v7H4zM13 14h7v7h-7zM22 14h7v7h-7zM4 23h7v7H4zM13 23h7v7h-7zM4 32h7v7H4zM13 32h7v7h-7z" />
          <path fill="#2a4f94" d="M22 23h7v16h-7z" />
        </svg>
        <svg viewBox="0 0 40 40" className="ml-[11px] size-10">
          <path fill="#fff" d="M20 0a20 20 0 1 1-9 37.500L0 40l3-10.500A20 20 0 0 1 20 0z" />
          <path fill="#2cb742" d="M20 3a17 17 0 1 1-8.500 31.500L4.500 36.500l2-6.500A17 17 0 0 1 20 3z" />
          <path fill="#fff" d="M13 11c1.500-1.500 3-1 3.500.5l1 3c.4 1-1 2-1.300 2.800 1.500 3 3.500 4.700 6.300 6 1-.6 1.600-2.300 2.800-1.800l3.200 1.500c1.500.8.6 3-.6 4.200-2.500 2.200-7.500.8-11-2.600-4.500-4-7-10.500-3.900-13.600z" />
        </svg>
        <svg viewBox="0 0 47 33" className="ml-[5px] h-[33px] w-[47px]">
          <rect width="47" height="33" rx="7" fill="#f00" />
          <path fill="#fff" d="m18.500 10 13 6.500-13 6.500z" />
        </svg>
      </div>
    </div>
  );
}

function Watermark() {
  return (
    <div className="pointer-events-none absolute bottom-[20px] left-1/2 flex -translate-x-1/2 flex-col items-center text-white/35">
      <span dir="rtl" className="font-['DejaVu_Sans',sans-serif] text-[66px] leading-[80px] font-bold">مستقل</span>
      <span className="font-['Roboto',sans-serif] text-[40px] leading-[42px] font-medium">mostaql.com</span>
    </div>
  );
}

const badge = "absolute right-[9px] bottom-2 flex size-[14px] items-center justify-center rounded-full text-[9px] text-white";

const apps = [
  { name: "Copilot", icon: <Copilot /> },
  { name: "File Explorer", icon: <ExplorerIcon />, open: true },
  { name: "Microsoft Store", icon: <Store /> },
  { name: "Brave", icon: <Brave /> },
  { name: "Outlook", icon: <Outlook /> },
  { name: "Visual Studio Code", icon: <VsCode /> },
  { name: "WhatsApp", icon: <FaWhatsapp className="size-[26px] text-[#25d366]" /> },
  { name: "Antigravity", icon: <Antigravity />, open: true },
  { name: "Spotify", icon: <FaSpotify className="size-[22px] text-[#1ed760]" /> },
  {
    name: "Chrome",
    icon: (
      <>
        <Chrome />
        <svg viewBox="0 0 14 14" className="absolute right-[8px] bottom-[7px] size-[15px]">
          <circle cx="7" cy="7" r="7" fill="#11151f" />
          <path fill="none" stroke="#dfe3ea" strokeWidth="1.400" d="M4 12c0-4 1-7 2.500-9 1.500-1 2 1 0 3" />
        </svg>
      </>
    ),
    open: true,
    active: true,
  },
  { name: "Edge", icon: <Edge /> },
  { name: "Claude", icon: <Claude />, open: true },
  { name: "Command Prompt", icon: <Terminal /> },
  { name: "Photos", icon: <Photos /> },
  { name: "CapCut", icon: <CapCut /> },
  { name: "Telegram", icon: <FaTelegram className="size-[21px] rounded-full bg-white text-[#1e9bd7]" /> },
  { name: "ChatGPT", icon: <span className="flex size-6 items-center justify-center border-4 border-[#77777a] bg-[#15171a]"><SiOpenai className="size-3 text-white" /></span> },
  { name: "Zoom", icon: <Zoom /> },
  { name: "Calendar", icon: <CalendarSmile /> },
  { name: "Cloud", icon: <CloudApp /> },
  { name: "Chrome profile", icon: <><Chrome /><span className={`${badge} bg-[#f4511e]`}>A</span></>, open: true },
];

function Taskbar() {
  return (
    <footer className="relative flex h-10 shrink-0 items-center bg-[#1b3352] font-['Noto_Sans',sans-serif] text-white">
      <svg className="absolute inset-0 size-full" viewBox="0 0 1920 40" preserveAspectRatio="none">
        <defs>
          <linearGradient id="dusk">
            <stop offset="0" stopColor="#14425a" />
            <stop offset=".3" stopColor="#173a58" />
            <stop offset=".5" stopColor="#25456a" />
            <stop offset=".75" stopColor="#28375a" />
            <stop offset="1" stopColor="#1a2c48" />
          </linearGradient>
        </defs>
        <path fill="url(#dusk)" d="M0 0h1920v40H0z" />
        <path fill="#0f1f36" d="M400 0h200l30 6-200 5-60-5zM820 0h260l-40 5-240 2zM1000 0h160v6l-160 4zM1345 0h20l-4 24h-14zM1520 12h180l20 6-180 4z" opacity=".85" />
        <path fill="#1f5273" d="M340 12h200l60 4-240 3zM620 14l170-4 60 8-240 6zM50 0h60v6H50zM1400 6l160 2 90 5-240 2z" />
        <path fill="#4b4a6a" d="M460 20l150-3 50 4-120 3zM470 34l110-4 90 5-50 5H470z" opacity=".9" />
        <path fill="#6a4c68" d="M1200 26l150-7 80 8-60 13h-180l-60-4zM1290 32l150-8 160 1-70 12-190 3z" opacity=".75" />
        <path fill="#2a3f68" d="M640 30l240-6 60 8-160 8H640zM1500 2l300 3 120 7v5l-240-4z" />
        <path fill="#101d33" d="M1650 18l150 1 120 6v9l-180-3-90-6z" opacity=".8" />
        <path fill="#5c4565" d="M1560 32l180-5 180 8v5h-320z" opacity=".7" />
      </svg>
      <button aria-label="Start" className="relative flex w-12 justify-center"><Windows /></button>
      <label className="relative flex h-[38px] w-[288px] items-center bg-[#f3f3f3] pr-[6px] pl-3 text-[#222]">
        <Search className="size-[17px] -scale-x-100" strokeWidth={1.7} />
        <input
          type="text"
          aria-label="Search"
          placeholder="Type here to search"
          className="ml-[11px] w-0 flex-1 bg-transparent text-sm outline-none placeholder:text-[#3a3a3a]"
        />
        <SearchScene />
      </label>
      <button aria-label="Task view" className="relative flex w-12 justify-center"><TaskView /></button>
      <div className="relative ml-[14px] flex gap-px">
        {apps.map((app) => (
          <button
            key={app.name}
            aria-label={app.name}
            className={`relative flex h-10 w-12 items-center justify-center ${app.active ? "bg-white/25" : ""}`}
          >
            {app.icon}
            {app.open && (
              <span className={`absolute bottom-0 h-[2px] bg-[#76b9ed] ${app.active ? "w-12" : "w-10"}`} />
            )}
          </button>
        ))}
      </div>
      <div className="relative ml-auto flex items-center pr-6">
        <svg viewBox="0 0 18 24" className="h-[22px] w-[17px]">
          <rect x="1" y="0" width="8" height="20" rx="4" fill="#cfe8f8" />
          <circle cx="5" cy="19" r="5" fill="#cfe8f8" />
          <path stroke="#d8364a" strokeWidth="2.500" d="M5 5v10" />
          <circle cx="5" cy="19" r="3" fill="#1f7ad8" />
          <path stroke="#2f9df0" strokeWidth="1.800" fill="none" d="M14 6v11M11 14l3 3.500 3-3.500" />
        </svg>
        <span dir="rtl" className="ml-4 font-['DejaVu_Sans',sans-serif] text-[13px]">درجات الحرارة تنخفض</span>
        <ChevronUp className="ml-6 size-4" />
        <svg viewBox="0 0 16 18" className="ml-2 h-[16px] w-[14px]" fill="none" stroke="#fff" strokeWidth="1.300">
          <rect x="2" y="5" width="8" height="8" rx="1.500" />
          <path d="m10 8 3-2v6l-3-2M3 2c2-1.500 5-1.500 7 0M3 16c2 1.500 5 1.500 7 0" />
        </svg>
        <svg viewBox="0 0 16 16" className="ml-[10px] size-[15px]" fill="none" stroke="#fff" strokeWidth="1.200">
          <path d="M2 15A13 13 0 0 1 15 2M5.500 15A9.500 9.500 0 0 1 15 5.500M9 15a6 6 0 0 1 6-6" />
          <circle cx="13.500" cy="13.500" r="1.500" fill="#fff" stroke="none" />
        </svg>
        <svg viewBox="0 0 18 18" className="ml-[7px] size-4">
          <path fill="#e8e8e8" d="M4 12a4 4 0 0 1 0-8 5 5 0 0 1 9 0c3 0 4 2 4 4l-6 5z" />
          <circle cx="12.500" cy="12.500" r="5" fill="#1a7ad8" />
          <path stroke="#fff" strokeWidth="1.400" d="M12.500 9.300v1.400M12.500 11.700v4" />
        </svg>
        <Volume2 className="ml-[7px] size-[17px]" strokeWidth={1.600} />
        <span className="ml-[18px] font-['DejaVu_Sans',sans-serif] text-[13px]">ع</span>
        <div className="ml-[15px] flex w-[64px] flex-col items-center text-xs leading-[18px]">
          <span>7:08 PM</span>
          <span>4/13/2026</span>
        </div>
        <svg viewBox="0 0 18 18" className="ml-[12px] size-[17px]">
          <path fill="#fff" d="M1 1h16v12h-4l-4 4v-4H1z" />
          <path stroke="#1a2a44" d="M4 4.500h10M4 7h10M4 9.500h6" />
          <circle cx="14" cy="13" r="3.500" fill="#fff" stroke="#1a2a44" />
        </svg>
      </div>
    </footer>
  );
}

export default function App() {
  return (
    <div className="relative flex min-h-screen flex-col bg-[#171717] font-['Inter',sans-serif]">
      <Browser />
      <div className="flex flex-1">
        <Sidebar />
        <div className="flex min-w-0 flex-1 flex-col">
          <Header />
          <Canvas />
          <LogsBar />
        </div>
      </div>
      <Taskbar />
      <Dock />
      <Watermark />
    </div>
  );
}
